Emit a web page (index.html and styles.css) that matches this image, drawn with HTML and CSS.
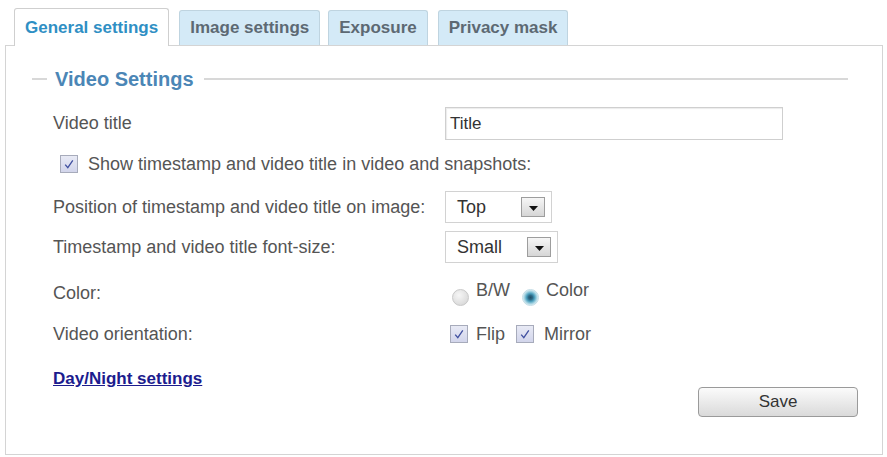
FILE: index.html
```html
<!DOCTYPE html>
<html lang="en">
<head>
<meta charset="UTF-8">
<title>Video Settings</title>
<link rel="stylesheet" href="styles.css">
</head>
<body>
<div class="tabs">
    <div class="tab active">General settings</div>
    <div class="tab">Image settings</div>
    <div class="tab tight">Exposure</div>
    <div class="tab">Privacy mask</div>
</div>

<div class="panel">
    <div class="legend">Video Settings</div>

    <div class="form">
        <div class="row r1">
            <div class="label">Video title</div>
            <div class="value"><div class="textbox">Title</div></div>
        </div>

        <div class="row r2 wide">
            <span class="check"><svg width="18" height="18" viewBox="0 0 18 18"><path d="M5.2 9.6 L7.8 12.6 L12.8 5.4" fill="none" stroke="#4050a0" stroke-width="1.3"/></svg></span>
            <span>Show timestamp and video title in video and snapshots:</span>
        </div>

        <div class="row r3">
            <div class="label">Position of timestamp and video title on image:</div>
            <div class="value">
                <div class="select sel-top">Top<span class="drop"><svg width="9" height="5" viewBox="0 0 9 5"><path d="M0 0 H9 L4.5 5 Z" fill="#111"/></svg></span></div>
            </div>
        </div>

        <div class="row r4">
            <div class="label">Timestamp and video title font-size:</div>
            <div class="value">
                <div class="select sel-small">Small<span class="drop"><svg width="9" height="5" viewBox="0 0 9 5"><path d="M0 0 H9 L4.5 5 Z" fill="#111"/></svg></span></div>
            </div>
        </div>

        <div class="row r5">
            <div class="label">Color:</div>
            <div class="value radios">
                <span class="radio"></span><span class="opt">B/W</span>
                <span class="radio on"></span><span class="opt">Color</span>
            </div>
        </div>

        <div class="row r6">
            <div class="label">Video orientation:</div>
            <div class="value checks">
                <span class="check"><svg width="18" height="18" viewBox="0 0 18 18"><path d="M5.2 9.6 L7.8 12.6 L12.8 5.4" fill="none" stroke="#4050a0" stroke-width="1.3"/></svg></span>
                <span class="opt">Flip</span>
                <span class="check"><svg width="18" height="18" viewBox="0 0 18 18"><path d="M5.2 9.6 L7.8 12.6 L12.8 5.4" fill="none" stroke="#4050a0" stroke-width="1.3"/></svg></span>
                <span class="opt">Mirror</span>
            </div>
        </div>

        <div class="links"><a href="#">Day/Night settings</a></div>

        <div class="actions"><button>Save</button></div>
    </div>
</div>
</body>
</html>
```

FILE: styles.css
```css
body {
    margin: 0;
    width: 887px;
    font-family: "Liberation Sans", Arial, sans-serif;
    font-size: 18px;
    color: #555;
    background-color: #fff;
}
.tabs {
    display: flex;
    align-items: flex-end;
    gap: 10px;
    padding: 8px 0 0 14px;
    margin-bottom: -1px;
    position: relative;
    z-index: 1;
}
.tab {
    height: 35px;
    margin-bottom: 1px;
    padding: 0 10px;
    box-sizing: border-box;
    display: flex;
    align-items: center;
    border: 1px solid #bfd4e0;
    border-bottom: none;
    border-radius: 3px 3px 0 0;
    background-color: #d4eaf7;
    color: #5d6973;
    font-size: 17px;
    font-weight: bold;
}
.tab.tight {
    margin-left: -2px;
}
.tab.active {
    height: 38px;
    margin-bottom: 0;
    background-color: #fff;
    border-color: #cfcfcf;
    color: #2f8fc4;
}
.panel {
    margin-left: 5px;
    width: 878px;
    height: 410px;
    box-sizing: border-box;
    border: 1px solid #d4d4d4;
    padding: 21px 24px 0 26px;
}
.legend {
    display: flex;
    align-items: center;
    height: 24px;
    font-size: 20px;
    font-weight: bold;
    color: #4b86b6;
}
.legend::before {
    content: "";
    width: 15px;
    height: 2px;
    background-color: #d8d8d8;
    margin-right: 8px;
}
.legend::after {
    content: "";
    flex: 1;
    height: 2px;
    background-color: #d8d8d8;
    margin: 0 10px;
}
.form {
    margin: 15px 0 0 21px;
}
.row {
    display: grid;
    grid-template-columns: 392px auto;
    align-items: center;
}
.r1 { height: 34px; }
.r2 { height: 48px; }
.r3 { height: 38px; }
.r4 { height: 42px; }
.r5 { height: 50px; }
.r6 { height: 32px; }
.row.wide {
    display: flex;
    padding-left: 7px;
    gap: 10px;
}
.value {
    display: flex;
    align-items: center;
}
.textbox {
    width: 338px;
    height: 33px;
    box-sizing: border-box;
    border: 1px solid #cfcfcf;
    box-shadow: inset 1px 1px 1px #ececec;
    padding-left: 4px;
    line-height: 31px;
    font-size: 17px;
    color: #333;
}
.select {
    height: 32px;
    box-sizing: border-box;
    border: 1px solid #d2d2d2;
    display: flex;
    align-items: center;
    justify-content: space-between;
    padding: 0 6px 0 11px;
    color: #333;
}
.sel-top { width: 107px; }
.sel-small { width: 113px; }
.drop {
    width: 24px;
    height: 20px;
    box-sizing: border-box;
    border: 1px solid #9d9d9d;
    background: linear-gradient(#f6f6f6, #d6d6d6);
    display: flex;
    align-items: center;
    justify-content: center;
    padding-top: 2px;
}
.check {
    width: 18px;
    height: 18px;
    box-sizing: border-box;
    border: 1px solid #a7abbb;
    background: linear-gradient(#e8eaf5, #d2d5eb);
    display: flex;
}
.check svg {
    margin: -1px;
}
.radios {
    align-items: flex-start;
    padding-left: 7px;
}
.radio {
    width: 17px;
    height: 17px;
    box-sizing: border-box;
    border-radius: 50%;
    border: 1px solid #c8c8c8;
    background: radial-gradient(circle at 40% 35%, #f6f6f6, #d2d2d2);
    margin-top: 9px;
}
.radio.on {
    margin-left: 12px;
    border-color: #c3dde6;
    background: radial-gradient(circle at 50% 50%, #234f66 0, #2c6784 2px, #4c9fbd 4px, #9dcfdf 6px, #e6f2f6 8px);
}
.opt {
    margin-left: 7px;
    line-height: 20px;
}
.checks {
    padding-left: 5px;
}
.checks .opt {
    margin: 0 11px 0 8px;
}
.checks .opt:last-child {
    margin: 0 0 0 10px;
}
.links {
    height: 37px;
    box-sizing: border-box;
    padding-top: 18px;
    line-height: 20px;
}
.links a {
    font-size: 17px;
    font-weight: bold;
    color: #1c1c8e;
}
.actions {
    display: flex;
    justify-content: flex-end;
}
button {
    width: 160px;
    height: 30px;
    border: 1px solid #9a9a9a;
    border-radius: 4px;
    background: linear-gradient(#fbfbfb, #dadada);
    font-family: "Liberation Sans", Arial, sans-serif;
    font-size: 17px;
    color: #333;
}
```
